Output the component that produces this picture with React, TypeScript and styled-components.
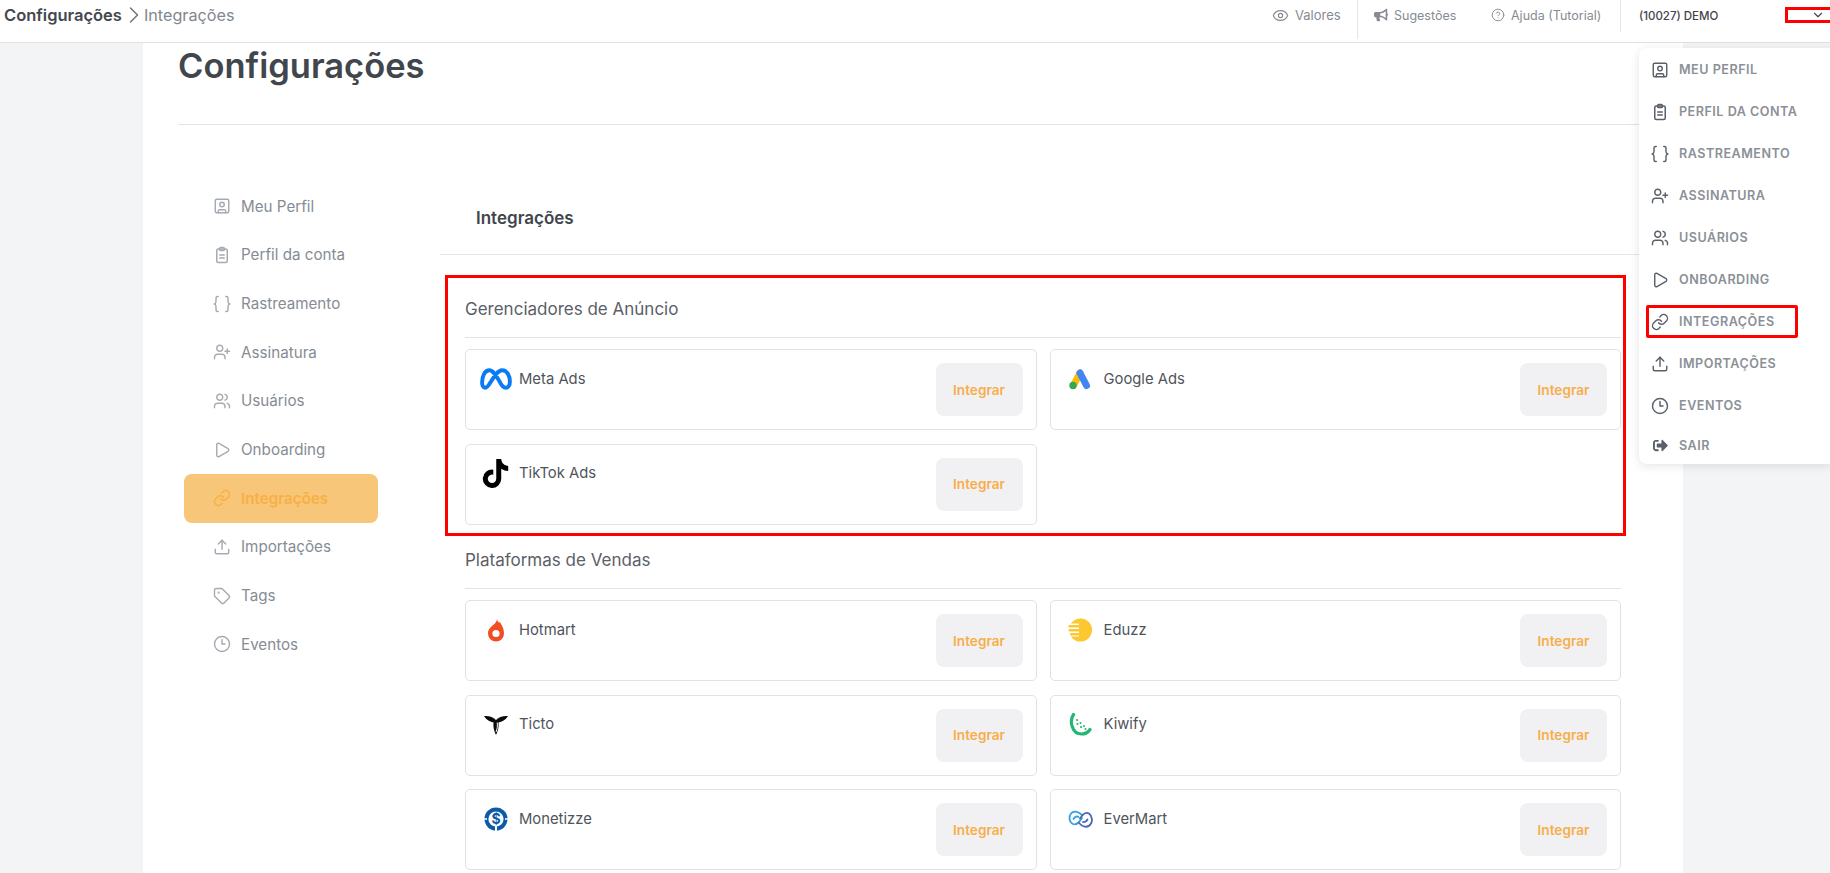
import React from "react";
import styled, { createGlobalStyle } from "styled-components";
import {
  SquareUser, UserPlus, Users, Play, Link as LinkIcon, Upload, Clock3, Tag, Eye, CircleHelp, ChevronDown, ChevronRight,
} from "lucide-react";
import { FaSignOutAlt, FaBullhorn, FaTiktok } from "react-icons/fa";

const Global = createGlobalStyle`
  html, body { margin: 0; padding: 0; height: 100%; overflow: hidden; background: #f3f4f6; }
  body { font-family: Inter, "Noto Sans", sans-serif; }
  * { box-sizing: border-box; }
`;

const Shell = styled.div`
  position: relative;
  width: 1830px;
  height: 873px;
  overflow: hidden;
  display: flex;
  flex-direction: column;
`;

const TopBar = styled.header`
  flex: none;
  height: 43px;
  background: #fff;
  border-bottom: 1px solid #dfe0e2;
  display: flex;
  align-items: flex-start;
  padding-left: 4px;
`;

const Crumbs = styled.div`
  display: flex;
  align-items: center;
  height: 30px;
  font-size: 16.200px;
  color: #81878f;
`;

const CrumbRoot = styled.span`
  font-weight: 600;
  font-size: 16.500px;
  color: #43484f;
`;

const CrumbSep = styled.span`
  display: flex;
  margin: 0 -4px 0 -2px;
  color: #72777e;
`;

const TopRight = styled.div`
  margin-left: auto;
  display: flex;
  align-items: flex-start;
`;

const TopLink = styled.div<{ $w: number; $h: number; $pl: number; $size?: number; $divider?: boolean }>`
  width: ${(p) => p.$w}px;
  height: ${(p) => p.$h}px;
  padding-left: ${(p) => p.$pl}px;
  padding-bottom: ${(p) => (p.$h > 35 ? 9 : 2)}px;
  display: flex;
  align-items: center;
  gap: 6px;
  font-size: ${(p) => p.$size ?? 12.5}px;
  color: #868b93;
  border-right: ${(p) => (p.$divider ? "1px solid #e4e5e7" : "0")};
`;

const Account = styled.div`
  width: 164px;
  height: 32px;
  padding-left: 18px;
  display: flex;
  align-items: center;
  font-size: 11.500px;
  font-weight: 500;
  color: #3f444b;
`;

const ChevronBox = styled.button`
  width: 45px;
  height: 16px;
  margin-top: 7px;
  padding: 0 5px 0 0;
  border: 3px solid #f00;
  border-right: 0;
  background: #fff;
  display: flex;
  align-items: center;
  justify-content: flex-end;
  color: #434850;
`;

const Stage = styled.div`
  flex: 1;
  min-height: 0;
  overflow: hidden;
  padding-left: 143px;
`;

const Panel = styled.main`
  width: 1540px;
  height: 100%;
  background: #fff;
  padding-left: 35px;
`;

const PageHead = styled.div`
  height: 82px;
  width: 1470px;
  border-bottom: 1px solid #e2e3e5;
`;

const PageTitle = styled.h1`
  margin: 0;
  font-size: 34.500px;
  line-height: 46px;
  font-weight: 600;
  color: #41464d;
`;

const Body = styled.div`
  display: flex;
  align-items: flex-start;
`;

const SideNav = styled.nav`
  flex: none;
  width: 194px;
  margin: 57px 62px 0 6px;
  display: flex;
  flex-direction: column;
`;

const SideRow = styled.div<{ $active?: boolean }>`
  height: 48.670px;
  padding-left: 29px;
  display: flex;
  align-items: center;
  gap: 10px;
  border-radius: 8px;
  font-size: 15.200px;
  font-weight: ${(p) => (p.$active ? 600 : 400)};
  color: ${(p) => (p.$active ? "#f8b044" : "#868c94")};
  background: ${(p) => (p.$active ? "#f7c678" : "transparent")};

  svg { color: ${(p) => (p.$active ? "#f8b044" : "#a5abb3")}; flex: none; }
`;

const Content = styled.section`
  flex: none;
  width: 1200px;
  margin-top: 57px;
`;

const ContentHead = styled.div`
  height: 73px;
  padding-left: 36px;
  display: flex;
  align-items: center;
  border-bottom: 1px solid #e4e5e7;
  font-size: 17px;
  font-weight: 600;
  color: #41464d;
`;

const Group = styled.div<{ $flagged?: boolean }>`
  width: 1181px;
  margin-left: 5px;
  margin-top: ${(p) => (p.$flagged ? "20px" : "10.500px")};
  padding: ${(p) => (p.$flagged ? "17px 2px 8px 17px" : "0 5px 0 20px")};
  border: ${(p) => (p.$flagged ? "3px solid #f00" : "0")};
`;

const GroupTitle = styled.h3`
  margin: 0 0 11px;
  padding-bottom: 14px;
  border-bottom: 1px solid #e2e3e5;
  font-size: 17px;
  line-height: 28px;
  font-weight: 400;
  color: #5b6068;
`;

const CardGrid = styled.div`
  display: grid;
  grid-template-columns: 1fr 1fr;
  gap: 13.500px 13px;
`;

const Card = styled.article`
  height: 81px;
  border: 1px solid #e1e2e4;
  border-radius: 5px;
  padding: 0 13px 0 11px;
  display: flex;
  align-items: center;
  justify-content: space-between;
`;

const Brand = styled.div`
  align-self: flex-start;
  margin-top: 11px;
  display: flex;
  align-items: center;
  gap: 5px;
  height: 36px;
  font-size: 14.800px;
  color: #4f545c;
`;

const BrandName = styled.span`
  margin-top: -1px;
`;

const LogoSlot = styled.span`
  width: 37px;
  height: 36px;
  display: flex;
  align-items: center;
  justify-content: center;
`;

const IntegrateButton = styled.button`
  width: 87px;
  height: 53px;
  border: 0;
  border-radius: 8px;
  background: #f1f1f4;
  color: #f7ae4a;
  font-family: inherit;
  font-size: 13.600px;
  font-weight: 600;
`;

const UserMenu = styled.aside`
  position: absolute;
  top: 48px;
  right: 0;
  width: 191px;
  height: 416px;
  background: #fff;
  border-radius: 8px 0 0 8px;
  box-shadow: 0 2px 10px rgba(60, 64, 70, 0.14);
  padding: 0.500px 0 0 7px;
`;

const MenuRow = styled.div<{ $flagged?: boolean; $last?: boolean }>`
  width: 152px;
  height: ${(p) => (p.$flagged ? 33 : p.$last ? 38 : 42)}px;
  margin: ${(p) => (p.$flagged ? "4.500px 0" : "0")};
  padding-left: ${(p) => (p.$flagged ? 2 : 5)}px;
  display: flex;
  align-items: center;
  gap: 10px;
  font-size: 12.600px;
  font-weight: 600;
  letter-spacing: 0.5px;
  color: #8b9097;
  white-space: nowrap;
  border: ${(p) => (p.$flagged ? "3px solid #f00" : "0")};
  border-radius: 2px;
`;

const MenuIcon = styled.span`
  flex: none;
  width: 18px;
  display: flex;
  justify-content: center;
  color: #5b6068;
`;

const ClipboardIcon = () => (
  <svg width="18" height="18" viewBox="0 0 24 24" fill="none" stroke="currentColor" strokeWidth="2" strokeLinecap="round" strokeLinejoin="round">
    <rect x="5" y="4" width="14" height="18" rx="2" />
    <rect x="9" y="2" width="6" height="4" rx="1" />
    <path d="M9 12h6M9 16h6" />
  </svg>
);

const BracesWide = () => (
  <svg width="18" height="18" viewBox="0 0 24 24" fill="none" stroke="currentColor" strokeWidth="1.900" strokeLinecap="round" strokeLinejoin="round">
    <path d="M7 2H6C4.500 2 4 3 4 4v5c0 1.500-1 2.500-2.500 3C3 12.500 4 13.500 4 15v5c0 1 .5 2 2 2h1" />
    <path d="M17 2h1c1.500 0 2 1 2 2v5c0 1.500 1 2.500 2.500 3-1.500.5-2.500 1.500-2.500 3v5c0 1-.5 2-2 2h-1" />
  </svg>
);

const MetaLogo = () => (
  <svg width="34" height="24" viewBox="0 0 33 23" fill="none">
    <path d="M3 15C3 8 6 3 10 3c4 0 7 6 10 11 2 4 4 6 6 6 2.500 0 4-2.500 4-6 0-6-3-11-7.500-11C18 3 14 10 11 15c-2 3.500-3.500 5-5 5-2 0-3-2.500-3-5z" stroke="#0a7af5" strokeWidth="3.800" strokeLinejoin="round" />
  </svg>
);

const GoogleAdsLogo = () => (
  <svg width="24" height="24" viewBox="0 0 24 24">
    <line x1="12" y1="6" x2="5.500" y2="18.500" stroke="#fbbc04" strokeWidth="7" strokeLinecap="round" />
    <line x1="12" y1="6" x2="18.500" y2="18.500" stroke="#4285f4" strokeWidth="7" strokeLinecap="round" />
    <circle cx="5" cy="18.500" r="3.700" fill="#34a853" />
  </svg>
);

const HotmartLogo = () => (
  <svg width="16" height="23" viewBox="0 0 16 23">
    <path d="M9 0c.5 3 2 4 3 3 .5 2 4 5 4 11.500a8 8 0 0 1-16 0C0 10 3 8 4 7c1.500-1.500 4.500-3 5-7z" fill="#f04e23" />
    <circle cx="8" cy="14.500" r="3.600" fill="#fff" />
  </svg>
);

const TictoLogo = () => (
  <svg width="24" height="20" viewBox="0 0 24 20">
    <path d="M0 1c5-.5 9 1 12 4 3-3 7-4.500 12-4-2.500 4-6 6-9.500 6.500C15 12 14 16 12 20c-2-4-3-8-2.500-12.500C6 7 2.500 5 0 1z" fill="#0b0b0b" />
    <path d="M13.200 7.500c.5 3.500 0 6.500-1.200 9.500" stroke="#fff" strokeWidth="1" fill="none" />
  </svg>
);

const MonetizzeLogo = () => (
  <svg width="24" height="24" viewBox="0 0 24 24">
    <circle cx="12" cy="12" r="11.500" fill="#0d5aa7" />
    <circle cx="12" cy="12" r="7.600" fill="#fff" />
    <rect x="11" y="18" width="2" height="6" fill="#fff" />
    <path d="M0 12h3M21 12h3" stroke="#fff" strokeWidth="1.500" />
    <text x="12" y="17" textAnchor="middle" fontSize="14" fontWeight="700" fontFamily="Inter, sans-serif" fill="#0d5aa7">$</text>
  </svg>
);

const EduzzLogo = () => (
  <svg width="24" height="24" viewBox="0 0 24 24">
    <circle cx="12.500" cy="12" r="11.500" fill="#fdc72f" />
    <rect x="0" y="5.500" width="11" height="13" fill="#fff" />
    <rect x="0.500" y="7" width="12" height="2.400" rx="1.200" fill="#fdc72f" />
    <rect x="0.500" y="11" width="12" height="2.400" rx="1.200" fill="#fdc72f" />
    <rect x="2" y="15" width="11" height="2.400" rx="1.200" fill="#fdc72f" />
  </svg>
);

const KiwifyLogo = () => (
  <svg width="24" height="24" viewBox="0 0 24 24" fill="none">
    <path d="M5.500 1.500C1 8 4 21 13.500 21c3.500 0 6.500-1.500 8.500-4.500" stroke="#26b574" strokeWidth="3.200" strokeLinecap="round" />
    <g fill="#26b574">
      <circle cx="9" cy="7" r="1.100" /><circle cx="9.500" cy="11" r="1.100" /><circle cx="12.500" cy="10" r="1" />
      <circle cx="13" cy="14" r="1.100" /><circle cx="16" cy="13" r="1" /><circle cx="17.500" cy="16" r="1" />
    </g>
  </svg>
);

const EverMartLogo = () => (
  <svg width="25" height="20" viewBox="0 0 25 20" fill="none" strokeWidth="1.800" strokeLinecap="round">
    <path d="M14 6C10 2 5.500 1.500 3 4.500c-2.500 3-2 8.500 2 10.500 3.500 1.500 6-1.500 9-6" stroke="#35a0df" />
    <path d="M5.500 10c1.500-2.500 3.500-3 5-2" stroke="#35a0df" />
    <path d="M11 14c3.500 4 8 5 11 2 3-3 2.500-9-1-11.500-3.500-2-6.500 1-9 5" stroke="#4c63b6" />
    <path d="M15 13c2 .5 3.500-.5 4.500-2.500" stroke="#4c63b6" />
  </svg>
);

const icon = { size: 18, strokeWidth: 1.9 };

const sideItems = [
  { label: "Meu Perfil", icon: <SquareUser {...icon} /> },
  { label: "Perfil da conta", icon: <ClipboardIcon /> },
  { label: "Rastreamento", icon: <BracesWide /> },
  { label: "Assinatura", icon: <UserPlus {...icon} /> },
  { label: "Usuários", icon: <Users {...icon} /> },
  { label: "Onboarding", icon: <Play {...icon} /> },
  { label: "Integrações", icon: <LinkIcon {...icon} />, active: true },
  { label: "Importações", icon: <Upload {...icon} /> },
  { label: "Tags", icon: <Tag {...icon} /> },
  { label: "Eventos", icon: <Clock3 {...icon} /> },
];

const menuItems = [
  { label: "MEU PERFIL", icon: <SquareUser {...icon} /> },
  { label: "PERFIL DA CONTA", icon: <ClipboardIcon /> },
  { label: "RASTREAMENTO", icon: <BracesWide /> },
  { label: "ASSINATURA", icon: <UserPlus {...icon} /> },
  { label: "USUÁRIOS", icon: <Users {...icon} /> },
  { label: "ONBOARDING", icon: <Play {...icon} /> },
  { label: "INTEGRAÇÕES", icon: <LinkIcon {...icon} />, flagged: true },
  { label: "IMPORTAÇÕES", icon: <Upload {...icon} /> },
  { label: "EVENTOS", icon: <Clock3 {...icon} /> },
  { label: "SAIR", icon: <FaSignOutAlt size={15} />, last: true },
];

const adManagers = [
  { name: "Meta Ads", logo: <MetaLogo /> },
  { name: "Google Ads", logo: <GoogleAdsLogo /> },
  { name: "TikTok Ads", logo: <FaTiktok size={29} color="#000" /> },
];

const salesPlatforms = [
  { name: "Hotmart", logo: <HotmartLogo /> },
  { name: "Eduzz", logo: <EduzzLogo /> },
  { name: "Ticto", logo: <TictoLogo /> },
  { name: "Kiwify", logo: <KiwifyLogo /> },
  { name: "Monetizze", logo: <MonetizzeLogo /> },
  { name: "EverMart", logo: <EverMartLogo /> },
];

const Integration = ({ name, logo }: { name: string; logo: React.ReactNode }) => (
  <Card>
    <Brand>
      <LogoSlot>{logo}</LogoSlot>
      <BrandName>{name}</BrandName>
    </Brand>
    <IntegrateButton>Integrar</IntegrateButton>
  </Card>
);

export default function App() {
  return (
    <Shell>
      <Global />
      <TopBar>
        <Crumbs>
          <CrumbRoot>Configurações</CrumbRoot>
          <CrumbSep><ChevronRight size={28} strokeWidth={1.3} /></CrumbSep>
          Integrações
        </Crumbs>
        <TopRight>
          <TopLink $w={86} $h={39} $pl={0} $size={13} $divider><Eye size={17} strokeWidth={1.7} />Valores</TopLink>
          <TopLink $w={133} $h={39} $pl={16}><FaBullhorn size={14} />Sugestões</TopLink>
          <TopLink $w={130} $h={32} $pl={0} $divider><CircleHelp size={14} strokeWidth={1.6} />Ajuda (Tutorial)</TopLink>
          <Account>(10027) DEMO</Account>
          <ChevronBox aria-label="Abrir menu"><ChevronDown size={14} strokeWidth={2} /></ChevronBox>
        </TopRight>
      </TopBar>
      <Stage>
        <Panel>
          <PageHead><PageTitle>Configurações</PageTitle></PageHead>
          <Body>
            <SideNav>
              {sideItems.map((item) => (
                <SideRow key={item.label} $active={item.active}>{item.icon}{item.label}</SideRow>
              ))}
            </SideNav>
            <Content>
              <ContentHead>Integrações</ContentHead>
              <Group $flagged>
                <GroupTitle>Gerenciadores de Anúncio</GroupTitle>
                <CardGrid>
                  {adManagers.map((i) => <Integration key={i.name} {...i} />)}
                </CardGrid>
              </Group>
              <Group>
                <GroupTitle>Plataformas de Vendas</GroupTitle>
                <CardGrid>
                  {salesPlatforms.map((i) => <Integration key={i.name} {...i} />)}
                </CardGrid>
              </Group>
            </Content>
          </Body>
        </Panel>
      </Stage>
      <UserMenu>
        {menuItems.map((item) => (
          <MenuRow key={item.label} $flagged={item.flagged} $last={item.last}>
            <MenuIcon>{item.icon}</MenuIcon>
            {item.label}
          </MenuRow>
        ))}
      </UserMenu>
    </Shell>
  );
}
